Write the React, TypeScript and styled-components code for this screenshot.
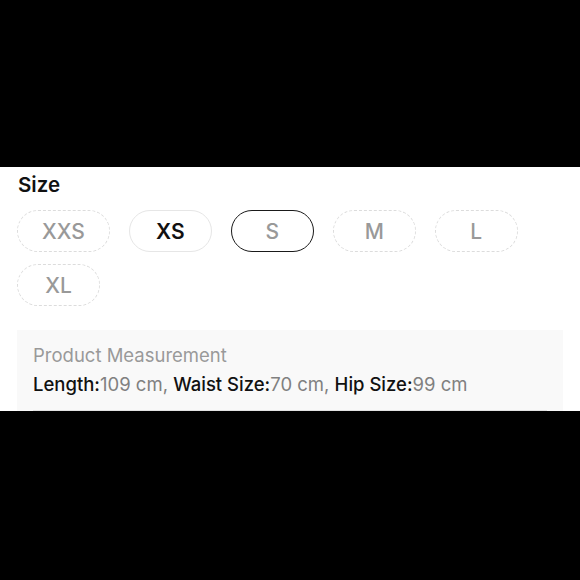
import React from "react";
import styled, { createGlobalStyle, css } from "styled-components";

const Global = createGlobalStyle`
  html, body { margin: 0; padding: 0; background: #000; }
  body { width: 580px; height: 580px; overflow: hidden; font-family: Inter, "Noto Sans", sans-serif; }
`;

const Band = styled.section`
  margin-top: 167px;
  height: 244px;
  background: #fff;
  overflow: hidden;
  padding: 6px 17px 0 17px;
  box-sizing: border-box;
  display: flex;
  flex-direction: column;
`;

const Title = styled.h2`
  margin: 0;
  padding-left: 1px;
  font-size: 20.5px;
  line-height: 24px;
  font-weight: 600;
  color: #111;
`;

const Sizes = styled.div`
  margin-top: 13px;
  display: flex;
  flex-wrap: wrap;
  column-gap: 19px;
  row-gap: 12px;
`;

type Variant = "unavailable" | "available" | "selected";

const Pill = styled.button<{ $variant: Variant }>`
  box-sizing: border-box;
  height: 42px;
  min-width: 83px;
  padding: 0 24px;
  border-radius: 21px;
  background: #fff;
  font-family: Inter, sans-serif;
  font-size: 21px;
  font-weight: 500;
  display: flex;
  align-items: center;
  justify-content: center;
  ${(p) =>
    p.$variant === "unavailable"
      ? css`
          border: 1.5px dashed #dcdcdc;
          color: #999;
        `
      : p.$variant === "available"
      ? css`
          border: 1.5px solid #e6e6e6;
          color: #111;
          font-weight: 600;
        `
      : css`
          border: 1.5px solid #1a1a1a;
          color: #999;
        `}
`;

const Measure = styled.div`
  margin-top: 24px;
  width: 546px;
  flex: 1;
  background: #f9f9f9;
  padding: 14px 16px 0 16px;
  box-sizing: border-box;
  display: flex;
  flex-direction: column;
  gap: 6px;
`;

const MeasureTitle = styled.div`
  font-size: 18.5px;
  line-height: 23px;
  color: #999;
`;

const MeasureLine = styled.div`
  font-size: 18.5px;
  line-height: 23px;
  color: #808080;
`;

const Label = styled.span`
  color: #111;
  font-weight: 500;
`;

const Divider = styled.div`
  margin-top: 8px;
  height: 1px;
  background: #e2e2e2;
`;

const sizes: { label: string; variant: Variant }[] = [
  { label: "XXS", variant: "unavailable" },
  { label: "XS", variant: "available" },
  { label: "S", variant: "selected" },
  { label: "M", variant: "unavailable" },
  { label: "L", variant: "unavailable" },
  { label: "XL", variant: "unavailable" },
];

export default function App() {
  return (
    <>
      <Global />
      <Band>
        <Title>Size</Title>
        <Sizes>
          {sizes.map((s) => (
            <Pill key={s.label} $variant={s.variant}>
              {s.label}
            </Pill>
          ))}
        </Sizes>
        <Measure>
          <MeasureTitle>Product Measurement</MeasureTitle>
          <MeasureLine>
            <Label>Length:</Label>109 cm, <Label>Waist Size:</Label>70 cm,{" "}
            <Label>Hip Size:</Label>99 cm
          </MeasureLine>
          <Divider />
        </Measure>
      </Band>
    </>
  );
}
